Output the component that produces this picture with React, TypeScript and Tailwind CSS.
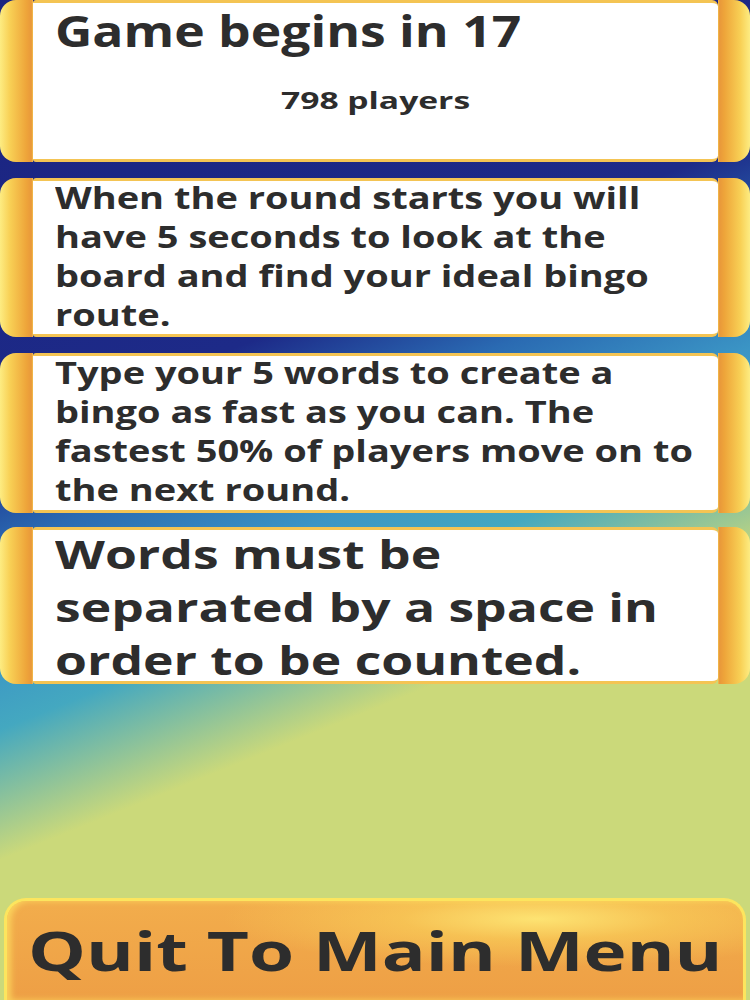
import type { ReactNode } from "react";

const font = { fontFamily: '"Open Sans", "Liberation Sans", sans-serif' };

function ScrollCard({
  className,
  children,
}: {
  className: string;
  children: ReactNode;
}) {
  return (
    <div className={`flex w-full shrink-0 ${className}`}>
      <div className="w-[33px] shrink-0 rounded-l-[16px] bg-[linear-gradient(to_right,#fdec82,#f8d055_30%,#eea53a_80%,#e9983a_95%,#f3c04e)]" />
      <div className="flex-1 rounded-r-[6px] rounded-l-[3px] border-y-[3px] border-[#f4c453] bg-white px-[22px]">
        {children}
      </div>
      <div className="w-[32px] shrink-0 rounded-r-[16px] bg-[linear-gradient(to_left,#fdec82,#f8d055_30%,#eea53a_80%,#e9983a_95%,#f3c04e)]" />
    </div>
  );
}

export default function App() {
  return (
    <div
      className="relative flex h-[1000px] w-[750px] flex-col overflow-hidden bg-[linear-gradient(158deg,#1b2380_0%,#1d2a88_34%,#2a6ab2_42%,#3b95c5_50%,#44a8c0_56%,#cbd97a_66%,#cbd97a_100%)] font-bold text-[#2d2d2d]"
      style={font}
    >
      <ScrollCard className="h-[162px]">
        <p className="w-fit origin-left scale-x-[1.2] whitespace-nowrap text-[43px] leading-[56px]">
          Game begins in 17
        </p>
        <p className="mx-auto mt-[25px] w-fit scale-x-[1.4] whitespace-nowrap text-[24px] leading-[32px]">
          798 players
        </p>
      </ScrollCard>

      <ScrollCard className="mt-[16px] h-[159px]">
        <p className="-mt-[3px] w-[515px] origin-left scale-x-[1.266] text-[30px] leading-[39px]">
          When the round starts you will have 5 seconds to look at the board
          and find your ideal bingo route.
        </p>
      </ScrollCard>

      <ScrollCard className="mt-[16px] h-[160px]">
        <p className="-mt-[3px] w-[515px] origin-left scale-x-[1.266] text-[30px] leading-[39px]">
          Type your 5 words to create a bingo as fast as you can. The fastest
          50% of players move on to the next round.
        </p>
      </ScrollCard>

      <ScrollCard className="mt-[14px] h-[157px]">
        <p className="-mt-[3px] w-[478px] origin-left scale-x-[1.29] text-[40px] leading-[53px]">
          Words must be separated by a space in order to be counted.
        </p>
      </ScrollCard>

      <div className="mt-auto px-[4px]">
        <button className="flex h-[102px] w-full items-start justify-center rounded-t-[22px] border-[3px] border-b-0 border-[#fce55e] bg-[radial-gradient(ellipse_at_72%_18%,#fde372_0%,rgba(250,210,90,0.6)_18%,transparent_42%),linear-gradient(to_bottom,#f2ad4c,#ee9f45)] pt-[16px] text-[#2d2d2d] shadow-[inset_4px_0_6px_rgba(255,230,100,0.7)]">
          <span className="scale-x-[1.35] whitespace-nowrap text-[54px] leading-[66px]">
            Quit To Main Menu
          </span>
        </button>
      </div>
    </div>
  );
}
